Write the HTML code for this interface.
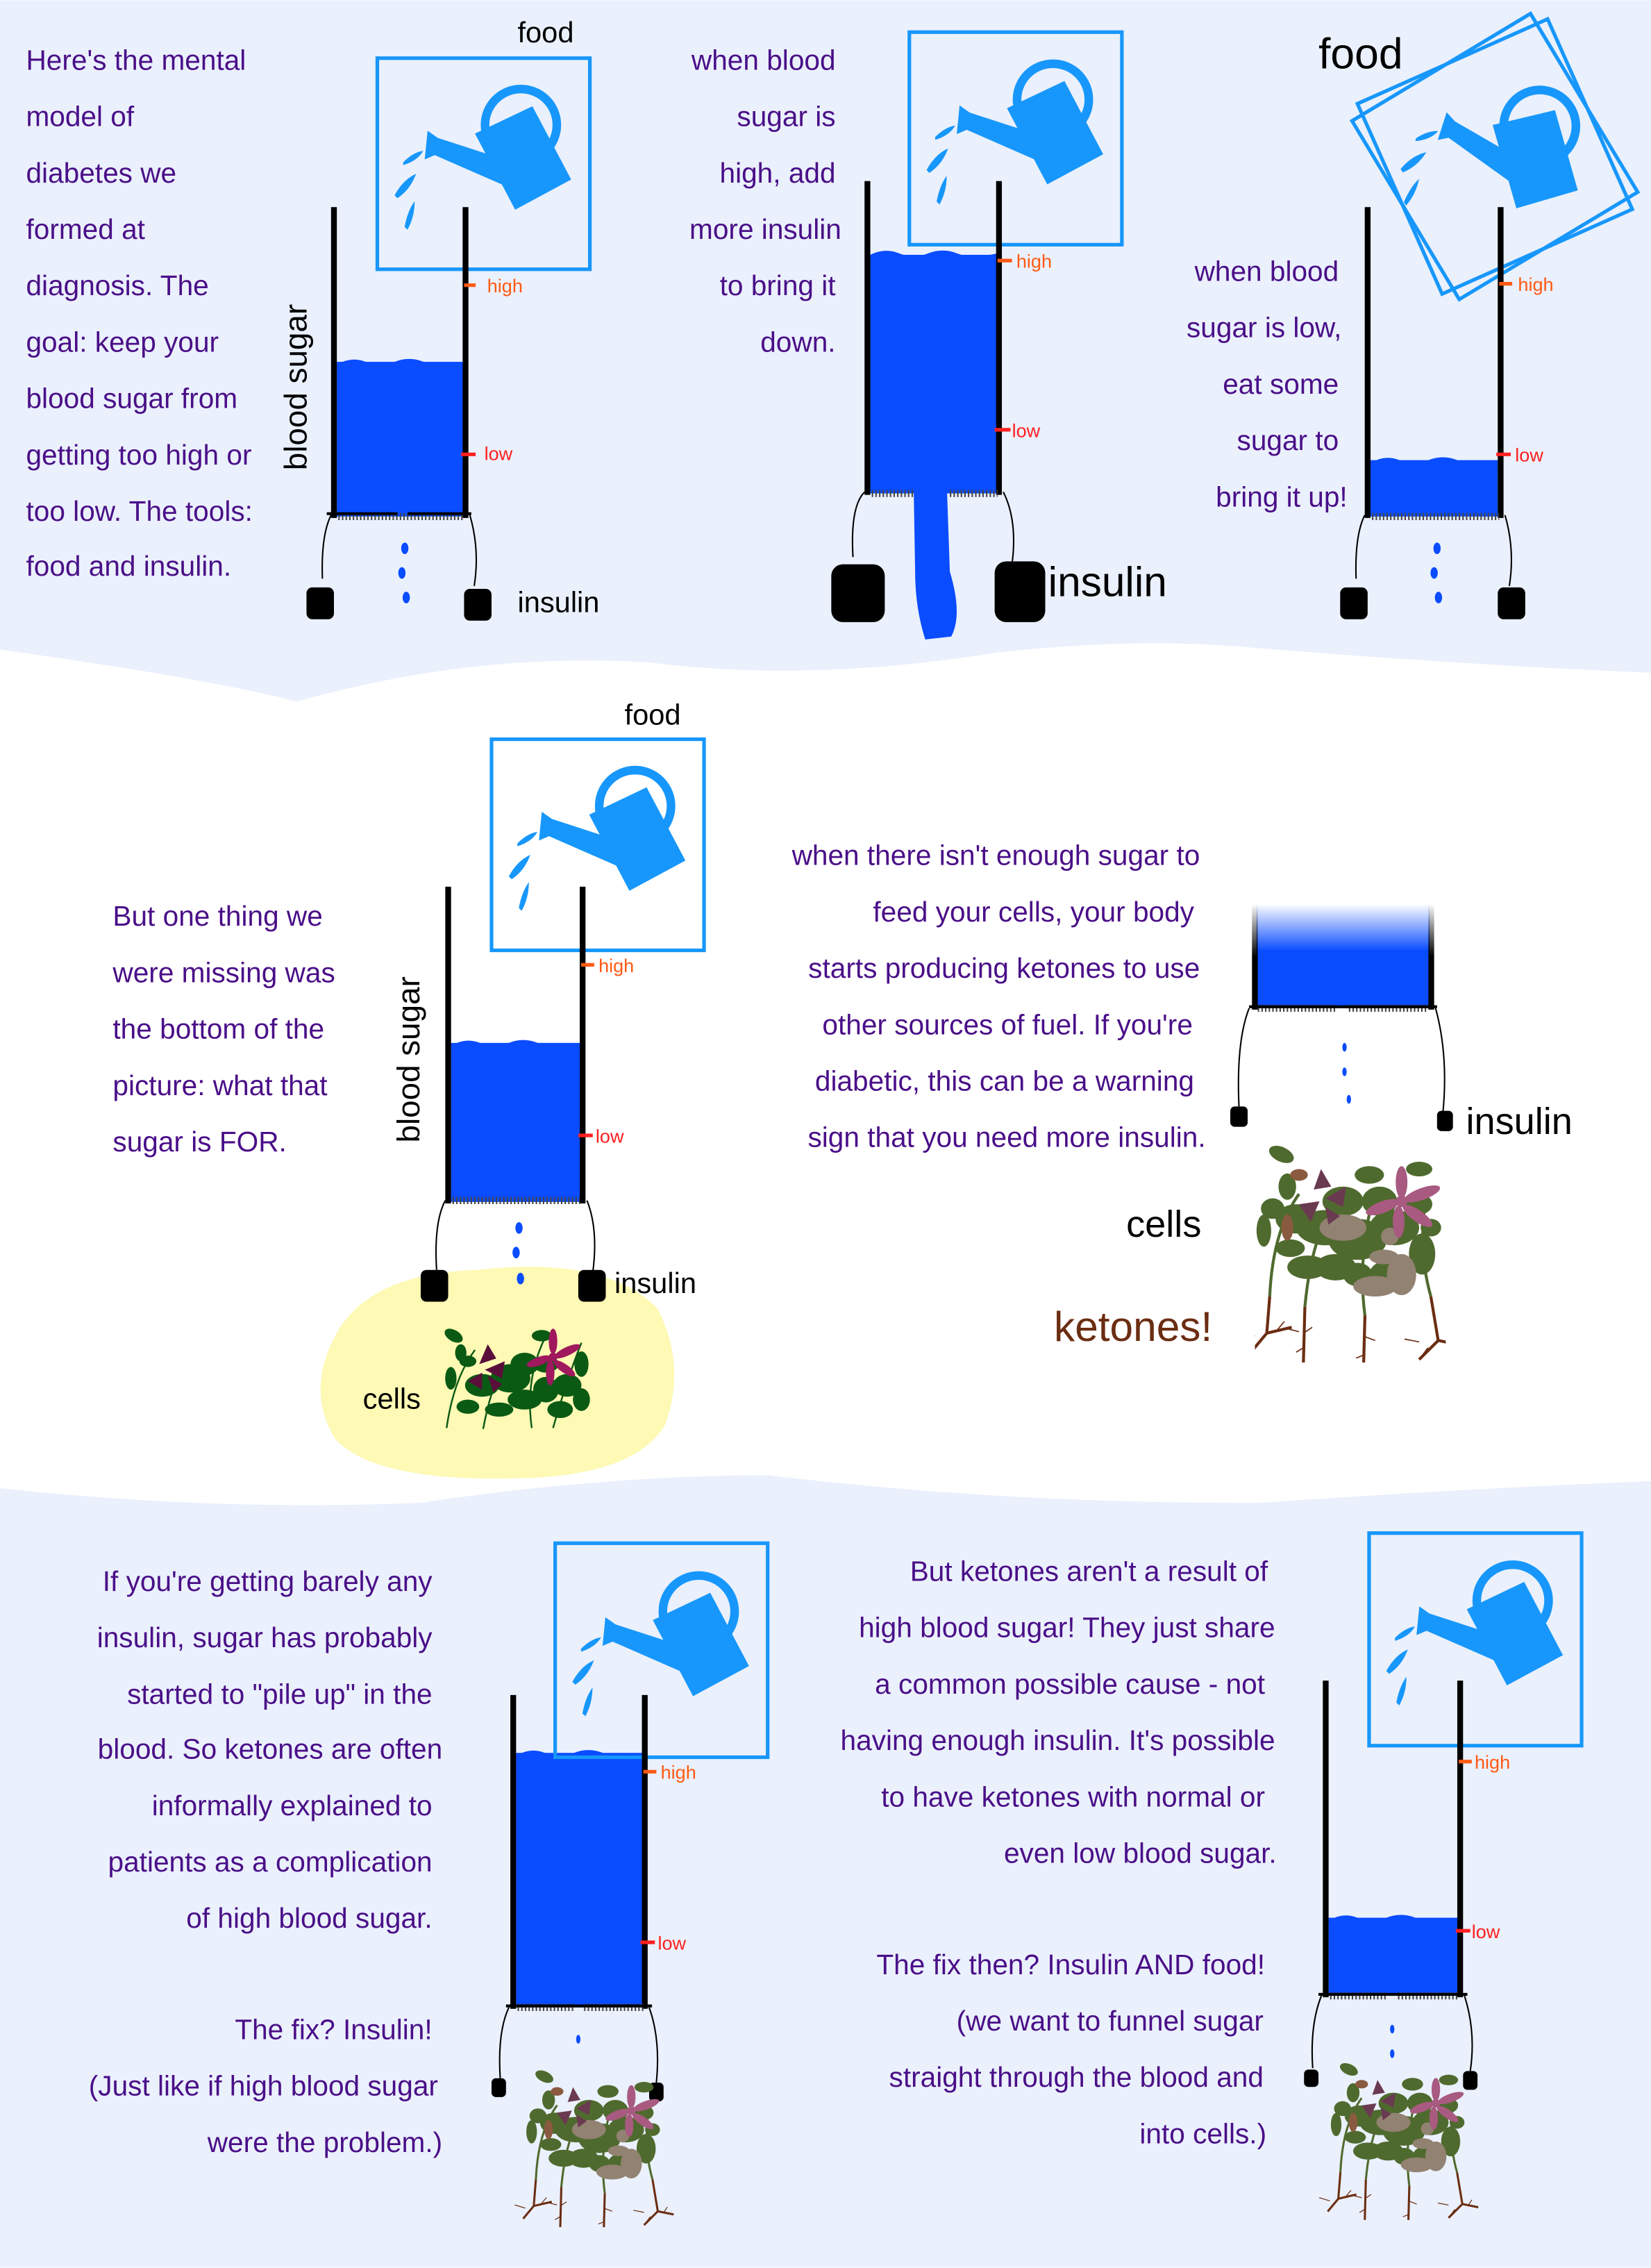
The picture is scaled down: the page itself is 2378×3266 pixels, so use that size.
<!DOCTYPE html>
<html><head><meta charset="utf-8"><style>
html,body{margin:0;padding:0;background:#fff}
svg{display:block}
text{font-family:"Liberation Sans",sans-serif}
.p{fill:#4a0f88;font-size:19.5px}
.b{fill:#000}
.hi{fill:#ff5a14;font-size:13px}
.lo{fill:#ff2020;font-size:13px}
</style></head><body>
<svg width="2378" height="3266" viewBox="0 0 1142 1568" xmlns="http://www.w3.org/2000/svg">
<defs>
<symbol id="can" viewBox="0 0 148 146">
 <circle cx="100" cy="46" r="25" fill="none" stroke="#1797fb" stroke-width="6"/>
 <path d="M68,52 L108,33 L135,84 L96,105 Z" fill="#1797fb"/>
 <path d="M82,68 L42,55 L35,50 L33,70 L40,67 L88,88 Z" fill="#1797fb"/>
 <path d="M18,72 q7,-7 14,-8 q-4,7 -14,10z M12,95 q6,-11 15,-15 q-4,11 -13,17z M19,117 q2,-11 7,-18 q0,11 -5,20z" fill="#1797fb"/>
</symbol>
<symbol id="plantA" viewBox="0 0 110 75">
 <g fill="#0b5a14">
 <ellipse cx="10" cy="10" rx="7" ry="4" transform="rotate(30 10 10)"/><ellipse cx="20" cy="28" rx="6" ry="4"/><ellipse cx="8" cy="40" rx="4" ry="8"/>
 <ellipse cx="30" cy="45" rx="12" ry="8"/><ellipse cx="50" cy="40" rx="14" ry="10"/><ellipse cx="60" cy="55" rx="12" ry="7"/>
 <ellipse cx="75" cy="30" rx="9" ry="6"/><ellipse cx="90" cy="45" rx="10" ry="8"/><ellipse cx="100" cy="30" rx="5" ry="9"/>
 <ellipse cx="72" cy="10" rx="7" ry="4"/><ellipse cx="20" cy="60" rx="8" ry="5"/><ellipse cx="85" cy="62" rx="9" ry="6"/><ellipse cx="42" cy="62" rx="10" ry="5"/>
 <ellipse cx="60" cy="30" rx="10" ry="8"/><ellipse cx="75" cy="48" rx="9" ry="9"/><ellipse cx="100" cy="55" rx="6" ry="8"/><ellipse cx="15" cy="22" rx="4" ry="6"/>
 </g>
 <g stroke="#0b5a14" stroke-width="1.2" fill="none"><path d="M5,75 Q10,40 25,20 M30,80 Q35,50 45,30 M65,75 Q60,40 75,10 M80,75 Q90,40 100,15"/></g>
 <g fill="#5a0e3a"><path d="M28,30 l6,-14 l6,10z M32,34 l14,-6 l-2,12z M30,36 l-10,6 l10,6z M34,38 l4,12 l6,-6z"/></g>
 <g fill="#a0185e" transform="translate(80,25)"><ellipse cx="0" cy="-11" rx="3" ry="9"/><ellipse cx="10" cy="-4" rx="10" ry="3" transform="rotate(-25 10 -4)"/><ellipse cx="8" cy="8" rx="9" ry="3" transform="rotate(35 8 8)"/><ellipse cx="-2" cy="11" rx="3" ry="9"/><ellipse cx="-10" cy="3" rx="9" ry="3" transform="rotate(-20 -10 3)"/><circle r="3"/></g>
</symbol>
<symbol id="plantB" viewBox="0 0 130 150">
 <g fill="#4f6a2e">
 <ellipse cx="18" cy="8" rx="9" ry="5" transform="rotate(25 18 8)"/><ellipse cx="22" cy="30" rx="6" ry="9"/><ellipse cx="6" cy="60" rx="5" ry="11"/>
 <ellipse cx="12" cy="45" rx="8" ry="7"/><ellipse cx="28" cy="52" rx="14" ry="10"/><ellipse cx="48" cy="58" rx="20" ry="12"/><ellipse cx="70" cy="66" rx="20" ry="14"/><ellipse cx="95" cy="58" rx="17" ry="12"/>
 <ellipse cx="112" cy="42" rx="9" ry="7"/><ellipse cx="114" cy="76" rx="9" ry="14"/><ellipse cx="78" cy="22" rx="10" ry="6"/><ellipse cx="36" cy="85" rx="14" ry="8"/><ellipse cx="92" cy="90" rx="14" ry="10"/><ellipse cx="112" cy="18" rx="9" ry="5"/>
 <ellipse cx="60" cy="40" rx="14" ry="10"/><ellipse cx="85" cy="40" rx="12" ry="10"/><ellipse cx="55" cy="85" rx="14" ry="9"/><ellipse cx="70" cy="90" rx="10" ry="8"/><ellipse cx="120" cy="58" rx="7" ry="6"/><ellipse cx="24" cy="72" rx="10" ry="6"/>
 </g>
 <g stroke="#4f6a2e" stroke-width="2" fill="none"><path d="M10,105 Q12,60 30,35 M34,112 Q38,70 50,50 M75,118 Q70,80 80,40 M120,105 Q110,70 118,30"/></g>
 <g fill="#8a5a40"><ellipse cx="30" cy="22" rx="6" ry="4"/><ellipse cx="22" cy="58" rx="4" ry="9"/></g>
 <g fill="#928272"><ellipse cx="60" cy="58" rx="16" ry="9"/><ellipse cx="82" cy="98" rx="15" ry="7"/><ellipse cx="100" cy="90" rx="10" ry="14"/><ellipse cx="88" cy="78" rx="10" ry="5"/><ellipse cx="92" cy="64" rx="6" ry="6"/></g>
 <g fill="#6a3a50"><path d="M40,32 l5,-14 l7,12z M48,38 l14,-8 l-2,14z M44,40 l-14,2 l8,12z M48,44 l2,12 l8,-6z"/></g>
 <g fill="#a85a80" transform="translate(100,40)"><ellipse cx="0" cy="-13" rx="4" ry="11"/><ellipse cx="14" cy="-5" rx="13" ry="4" transform="rotate(-20 14 -5)"/><ellipse cx="11" cy="10" rx="12" ry="4" transform="rotate(35 11 10)"/><ellipse cx="-2" cy="14" rx="4" ry="11"/><ellipse cx="-13" cy="4" rx="12" ry="4" transform="rotate(-20 -13 4)"/><circle r="4"/></g>
 <g stroke="#6b2d12" stroke-width="2" fill="none"><path d="M10,105 L8,130 L-2,142 M8,130 L25,126 M34,112 L33,150 M75,118 L74,155 M120,105 L125,135 L112,148 M125,135 L140,138"/></g>
 <g stroke="#6b2d12" stroke-width="0.8" fill="none"><path d="M0,132 l-10,-3 M15,128 l5,-6 M22,127 l8,2 M33,130 l6,-4 M33,140 l-5,3 M74,132 l8,3 M74,145 l-5,2 M118,140 l-6,8 M130,137 l4,-6 M112,136 l-10,-2"/></g>
</symbol>
</defs>

<rect x="0" y="0" width="1142" height="1568" fill="#fff"/>
<path d="M0,0 H1142 V465 Q1020,460 870,448 Q790,440 690,451 Q560,472 450,458 Q330,450 205,485 Q150,470 0,449 Z" fill="#eaf0fc"/>
<path d="M0,1029 Q150,1045 291,1039 Q420,1020 531,1020 Q700,1040 873,1039 Q1000,1030 1142,1024 V1568 H0 Z" fill="#eaf0fc"/>

<!-- Panel 1 -->
<g class="p">
<text x="18" y="48">Here's the mental</text>
<text x="18" y="87">model of</text>
<text x="18" y="126">diabetes we</text>
<text x="18" y="165">formed at</text>
<text x="18" y="204">diagnosis. The</text>
<text x="18" y="243">goal: keep your</text>
<text x="18" y="282">blood sugar from</text>
<text x="18" y="321">getting too high or</text>
<text x="18" y="360">too low. The tools:</text>
<text x="18" y="398">food and insulin.</text>
</g>
<text x="358" y="29" class="b" font-size="20">food</text>
<rect x="261" y="40" width="147" height="146" fill="none" stroke="#1797fb" stroke-width="2.5"/>
<use href="#can" x="261" y="40" width="147" height="146"/>
<text transform="translate(212,325) rotate(-90)" class="b" font-size="22">blood sugar</text>
<rect x="233" y="250" width="88" height="107" fill="#0a4cff"/>
<path d="M233,252 q10,-6 20,-2 t20,0 t20,0 t28,0 v4 h-88z" fill="#0a4cff"/>
<line x1="231" y1="143" x2="231" y2="358" stroke="#000" stroke-width="4"/>
<line x1="322" y1="143" x2="322" y2="358" stroke="#000" stroke-width="4"/>
<path d="M234,357 H321" stroke="#444" stroke-width="5" stroke-dasharray="1,1.5"/>
<line x1="226" y1="355" x2="275" y2="355" stroke="#000" stroke-width="2"/><line x1="282" y1="355" x2="326" y2="355" stroke="#000" stroke-width="2"/>
<path d="M229,356 Q222,370 223,400 M325,356 Q332,380 328,405" stroke="#000" fill="none"/>
<rect x="212" y="406" width="19" height="22" rx="4" fill="#000"/><rect x="321" y="407" width="19" height="22" rx="4" fill="#000"/>
<ellipse cx="280" cy="379" rx="2.5" ry="4" fill="#0a4cff"/><ellipse cx="278" cy="396" rx="2.5" ry="4" fill="#0a4cff"/><ellipse cx="281" cy="413" rx="2.5" ry="4" fill="#0a4cff"/>
<line x1="321" y1="197" x2="329" y2="197" stroke="#ff5a14" stroke-width="2.5"/><text x="337" y="202" class="hi">high</text>
<line x1="319" y1="314" x2="329" y2="314" stroke="#ff2020" stroke-width="2.5"/><text x="335" y="318" class="lo">low</text>
<text x="358" y="423" class="b" font-size="20">insulin</text>

<!-- Panel 2 -->
<g class="p" text-anchor="end">
<text x="578" y="48">when blood</text>
<text x="578" y="87">sugar is</text>
<text x="578" y="126">high, add</text>
<text x="582" y="165">more insulin</text>
<text x="578" y="204">to bring it</text>
<text x="578" y="243">down.</text>
</g>
<rect x="629" y="22" width="147" height="147" fill="none" stroke="#1797fb" stroke-width="2.5"/>
<use href="#can" x="629" y="22" width="147" height="147"/>
<rect x="602" y="176" width="88" height="165" fill="#0a4cff"/>
<path d="M602,176 q10,-5 20,-1 t20,0 t20,0 t28,0 v4 h-88z" fill="#0a4cff"/>
<line x1="600" y1="125" x2="600" y2="342" stroke="#000" stroke-width="4"/>
<line x1="691" y1="125" x2="691" y2="342" stroke="#000" stroke-width="4"/>
<path d="M603,341 H632 M657,341 H690" stroke="#444" stroke-width="5" stroke-dasharray="1,1.5"/>
<path d="M632,338 H655 L657,395 Q666,425 658,440 L640,442 Q633,420 633,395 Z" fill="#0a4cff"/>
<path d="M598,340 Q588,350 590,385 M694,340 Q704,360 700,390" stroke="#000" fill="none"/>
<rect x="575" y="390" width="37" height="40" rx="8" fill="#000"/><rect x="688" y="388" width="35" height="42" rx="8" fill="#000"/>
<line x1="690" y1="180" x2="700" y2="180" stroke="#ff5a14" stroke-width="2.5"/><text x="703" y="185" class="hi">high</text>
<line x1="688" y1="297" x2="699" y2="297" stroke="#ff2020" stroke-width="2.5"/><text x="700" y="302" class="lo">low</text>
<text x="725" y="412" class="b" font-size="29">insulin</text>

<!-- Panel 3 -->
<text x="912" y="47" class="b" font-size="30">food</text>
<g transform="translate(1034,108) rotate(-31)"><rect x="-72" y="-72" width="144" height="144" fill="none" stroke="#1797fb" stroke-width="2.5"/></g>
<g transform="translate(1034,108) rotate(-24)"><rect x="-72" y="-72" width="144" height="144" fill="none" stroke="#1797fb" stroke-width="2.5"/></g>
<g transform="translate(1034,108) rotate(12) translate(-74,-73)"><use href="#can" width="148" height="146"/></g>
<g class="p" text-anchor="end">
<text x="926" y="194">when blood</text>
<text x="928" y="233">sugar is low,</text>
<text x="926" y="272">eat some</text>
<text x="926" y="311">sugar to</text>
<text x="932" y="350">bring it up!</text>
</g>
<rect x="948" y="318" width="88" height="39" fill="#0a4cff"/>
<path d="M948,320 q10,-6 20,-2 t20,0 t20,0 t28,0 v4 h-88z" fill="#0a4cff"/>
<line x1="946" y1="143" x2="946" y2="358" stroke="#000" stroke-width="4"/>
<line x1="1038" y1="143" x2="1038" y2="358" stroke="#000" stroke-width="4"/>
<path d="M949,357 H1037" stroke="#444" stroke-width="5" stroke-dasharray="1,1.5"/>
<path d="M944,356 Q937,370 938,400 M1041,356 Q1048,380 1044,405" stroke="#000" fill="none"/>
<rect x="927" y="406" width="19" height="22" rx="4" fill="#000"/><rect x="1036" y="406" width="19" height="22" rx="4" fill="#000"/>
<ellipse cx="994" cy="379" rx="2.5" ry="4" fill="#0a4cff"/><ellipse cx="992" cy="396" rx="2.5" ry="4" fill="#0a4cff"/><ellipse cx="995" cy="413" rx="2.5" ry="4" fill="#0a4cff"/>
<line x1="1037" y1="196" x2="1046" y2="196" stroke="#ff5a14" stroke-width="2.5"/><text x="1050" y="201" class="hi">high</text>
<line x1="1035" y1="314" x2="1045" y2="314" stroke="#ff2020" stroke-width="2.5"/><text x="1048" y="319" class="lo">low</text>

<!-- Panel 4 -->
<g class="p">
<text x="78" y="640">But one thing we</text>
<text x="78" y="679">were missing was</text>
<text x="78" y="718">the bottom of the</text>
<text x="78" y="757">picture: what that</text>
<text x="78" y="796">sugar is FOR.</text>
</g>
<path d="M235,918 Q260,880 330,878 Q420,868 455,905 Q475,945 460,985 Q440,1020 360,1022 Q260,1025 232,995 Q210,960 235,918 Z" fill="#fef9b4"/>
<text x="432" y="501" class="b" font-size="20">food</text>
<rect x="340" y="511" width="147" height="146" fill="none" stroke="#1797fb" stroke-width="2.5"/>
<use href="#can" x="340" y="511" width="147" height="146"/>
<text transform="translate(290,790) rotate(-90)" class="b" font-size="22">blood sugar</text>
<rect x="312" y="721" width="89" height="110" fill="#0a4cff"/>
<path d="M312,723 q10,-6 20,-2 t20,0 t20,0 t29,0 v4 h-89z" fill="#0a4cff"/>
<line x1="310" y1="613" x2="310" y2="832" stroke="#000" stroke-width="4"/>
<line x1="403" y1="613" x2="403" y2="832" stroke="#000" stroke-width="4"/>
<path d="M313,830 H401" stroke="#444" stroke-width="5" stroke-dasharray="1,1.5"/>
<path d="M308,830 Q300,845 302,878 M406,830 Q414,850 410,880" stroke="#000" fill="none"/>
<rect x="291" y="878" width="19" height="22" rx="4" fill="#000"/><rect x="400" y="878" width="19" height="22" rx="4" fill="#000"/>
<ellipse cx="359" cy="849" rx="2.5" ry="4" fill="#0a4cff"/><ellipse cx="357" cy="866" rx="2.5" ry="4" fill="#0a4cff"/><ellipse cx="360" cy="884" rx="2.5" ry="4" fill="#0a4cff"/>
<line x1="402" y1="667" x2="411" y2="667" stroke="#ff5a14" stroke-width="2.5"/><text x="414" y="672" class="hi">high</text>
<line x1="400" y1="785" x2="410" y2="785" stroke="#ff2020" stroke-width="2.5"/><text x="412" y="790" class="lo">low</text>
<text x="425" y="894" class="b" font-size="20">insulin</text>
<text x="251" y="974" class="b" font-size="20">cells</text>
<use href="#plantA" x="304" y="913" width="108" height="75"/>

<!-- Panel 5 -->
<g class="p" text-anchor="end">
<text x="830" y="598">when there isn't enough sugar to</text>
<text x="826" y="637">feed your cells, your body</text>
<text x="830" y="676">starts producing ketones to use</text>
<text x="825" y="715">other sources of fuel. If you're</text>
<text x="826" y="754">diabetic, this can be a warning</text>
<text x="834" y="793">sign that you need more insulin.</text>
</g>
<defs><linearGradient id="fade" x1="0" y1="0" x2="0" y2="1"><stop offset="0" stop-color="#0a4cff" stop-opacity="0"/><stop offset="0.45" stop-color="#0a4cff"/></linearGradient>
<linearGradient id="fadew" x1="0" y1="0" x2="0" y2="1"><stop offset="0" stop-color="#000" stop-opacity="0"/><stop offset="0.5" stop-color="#000"/></linearGradient></defs>
<rect x="869" y="625" width="120" height="72" fill="url(#fade)"/>
<rect x="866" y="625" width="4" height="73" fill="url(#fadew)"/><rect x="988" y="625" width="4" height="73" fill="url(#fadew)"/>
<path d="M870,697 H925 M933,697 H988" stroke="#444" stroke-width="5" stroke-dasharray="1,1.5"/>
<line x1="864" y1="696" x2="994" y2="696" stroke="#000" stroke-width="2"/>
<path d="M864,697 Q855,720 857,765 M993,697 Q1002,730 998,770" stroke="#000" fill="none"/>
<rect x="851" y="765" width="12" height="14" rx="3" fill="#000"/><rect x="994" y="768" width="11" height="14" rx="3" fill="#000"/>
<ellipse cx="930" cy="724" rx="1.5" ry="3" fill="#0a4cff"/><ellipse cx="930" cy="741" rx="1.5" ry="3" fill="#0a4cff"/><ellipse cx="933" cy="760" rx="1.5" ry="3" fill="#0a4cff"/>
<text x="1014" y="784" class="b" font-size="26">insulin</text>
<text x="779" y="855" class="b" font-size="26">cells</text>
<text x="729" y="927" fill="#6b2d12" font-size="29" font-family="Liberation Sans,sans-serif">ketones!</text>
<use href="#plantB" x="868" y="790" width="132" height="152"/>

<!-- Panel 6 -->
<g class="p" text-anchor="end">
<text x="299" y="1100">If you're getting barely any</text>
<text x="299" y="1139">insulin, sugar has probably</text>
<text x="299" y="1178">started to "pile up" in the</text>
<text x="306" y="1216">blood. So ketones are often</text>
<text x="299" y="1255">informally explained to</text>
<text x="299" y="1294">patients as a complication</text>
<text x="299" y="1333">of high blood sugar.</text>
<text x="299" y="1410">The fix? Insulin!</text>
<text x="303" y="1449">(Just like if high blood sugar</text>
<text x="306" y="1488">were the problem.)</text>
</g>
<rect x="357" y="1212" width="88" height="176" fill="#0a4cff"/>
<path d="M357,1214 q10,-6 20,-2 t20,0 t20,0 t28,0 v4 h-88z" fill="#0a4cff"/>
<rect x="384" y="1067" width="147" height="148" fill="none" stroke="#1797fb" stroke-width="2.5"/>
<use href="#can" x="384" y="1067" width="147" height="148"/>
<line x1="355" y1="1172" x2="355" y2="1389" stroke="#000" stroke-width="4"/>
<line x1="446" y1="1172" x2="446" y2="1389" stroke="#000" stroke-width="4"/>
<path d="M358,1388 H398 M404,1388 H445" stroke="#444" stroke-width="5" stroke-dasharray="1,1.5"/>
<line x1="350" y1="1387" x2="451" y2="1387" stroke="#000" stroke-width="2"/>
<path d="M352,1388 Q344,1405 346,1437 M449,1388 Q457,1410 454,1440" stroke="#000" fill="none"/>
<rect x="340" y="1437" width="10" height="13" rx="3" fill="#000"/><rect x="449" y="1440" width="10" height="13" rx="3" fill="#000"/>
<ellipse cx="400" cy="1410" rx="1.5" ry="3" fill="#0a4cff"/>
<line x1="445" y1="1225" x2="454" y2="1225" stroke="#ff5a14" stroke-width="2.5"/><text x="457" y="1230" class="hi">high</text>
<line x1="443" y1="1343" x2="453" y2="1343" stroke="#ff2020" stroke-width="2.5"/><text x="455" y="1348" class="lo">low</text>
<use href="#plantB" x="352" y="1430" width="118" height="110"/>

<!-- Panel 7 -->
<g class="p" text-anchor="end">
<text x="877" y="1093">But ketones aren't a result of</text>
<text x="882" y="1132">high blood sugar! They just share</text>
<text x="875" y="1171">a common possible cause - not</text>
<text x="882" y="1210">having enough insulin. It's possible</text>
<text x="875" y="1249">to have ketones with normal or</text>
<text x="883" y="1288">even low blood sugar.</text>
<text x="875" y="1365">The fix then? Insulin AND food!</text>
<text x="874" y="1404">(we want to funnel sugar</text>
<text x="874" y="1443">straight through the blood and</text>
<text x="876" y="1482">into cells.)</text>
</g>
<rect x="947" y="1060" width="147" height="147" fill="none" stroke="#1797fb" stroke-width="2.5"/>
<use href="#can" x="947" y="1060" width="147" height="147"/>
<rect x="919" y="1326" width="89" height="54" fill="#0a4cff"/>
<path d="M919,1328 q10,-6 20,-2 t20,0 t20,0 t29,0 v4 h-89z" fill="#0a4cff"/>
<line x1="917" y1="1162" x2="917" y2="1381" stroke="#000" stroke-width="4"/>
<line x1="1010" y1="1162" x2="1010" y2="1381" stroke="#000" stroke-width="4"/>
<path d="M920,1380 H960 M967,1380 H1008" stroke="#444" stroke-width="5" stroke-dasharray="1,1.5"/>
<line x1="912" y1="1379" x2="1015" y2="1379" stroke="#000" stroke-width="2"/>
<path d="M914,1380 Q906,1400 908,1430 M1013,1380 Q1021,1405 1017,1432" stroke="#000" fill="none"/>
<rect x="902" y="1431" width="10" height="12" rx="3" fill="#000"/><rect x="1012" y="1432" width="10" height="13" rx="3" fill="#000"/>
<ellipse cx="963" cy="1403" rx="1.5" ry="3" fill="#0a4cff"/><ellipse cx="963" cy="1420" rx="1.5" ry="3" fill="#0a4cff"/>
<line x1="1009" y1="1218" x2="1018" y2="1218" stroke="#ff5a14" stroke-width="2.5"/><text x="1020" y="1223" class="hi">high</text>
<line x1="1007" y1="1335" x2="1017" y2="1335" stroke="#ff2020" stroke-width="2.5"/><text x="1018" y="1340" class="lo">low</text>
<use href="#plantB" x="910" y="1425" width="115" height="110"/>
</svg>
</body></html>
